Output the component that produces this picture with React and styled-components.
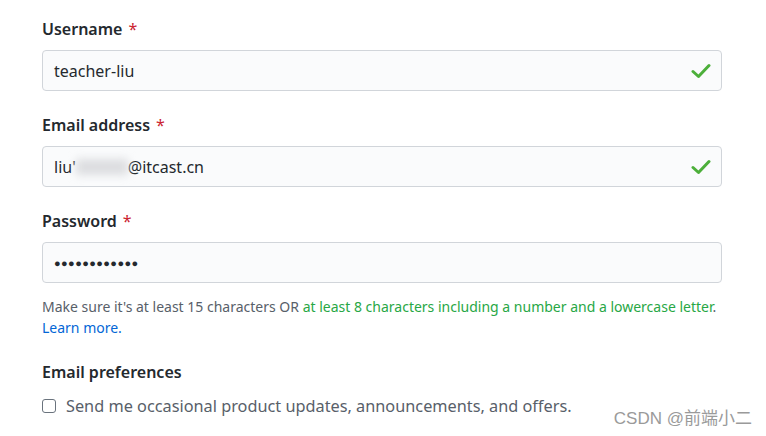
import * as React from "react";
import styled, { createGlobalStyle } from "styled-components";

const GlobalStyle = createGlobalStyle`
  html, body {
    margin: 0;
    padding: 0;
    background: #fff;
  }
  body {
    font-family: "Noto Sans", "Segoe UI", sans-serif;
    color: #24292e;
  }
`;

const Page = styled.div`
  position: relative;
  width: 766px;
  height: 436px;
  overflow: hidden;
  padding: 17px 0 0 42px;
  box-sizing: border-box;
`;

const Form = styled.form`
  width: 680px;
`;

const Field = styled.div`
  margin-bottom: 22px;
`;

const Label = styled.label`
  display: block;
  font-size: 16px;
  font-weight: 600;
  line-height: 24px;
  margin-bottom: 9px;
`;

const Required = styled.span`
  color: #cb2431;
  font-weight: 400;
  margin-left: 6px;
`;

const InputBox = styled.div`
  display: flex;
  align-items: center;
  height: 41px;
  box-sizing: border-box;
  padding: 0 10px 0 11px;
  background: #fafbfc;
  border: 1px solid #d1d5da;
  border-radius: 4px;
  font-size: 16px;
`;

const Value = styled.span`
  flex: 1;
  color: #24292e;
  font-size: ${(p) => (p.$dots ? "11px" : "16px")};
  letter-spacing: ${(p) => (p.$dots ? "0.4px" : "0")};
`;

const Blur = styled.span`
  display: inline-block;
  width: 52px;
  height: 16px;
  vertical-align: -2px;
  background: #dcdde0;
  filter: blur(4px);
`;

const Note = styled.p`
  margin: -9px 0 22px;
  font-size: 14px;
  line-height: 21px;
  color: #586069;
`;

const Green = styled.span`
  color: #28a745;
`;

const Link = styled.a`
  color: #0366d6;
  text-decoration: none;
`;

const Heading = styled.h3`
  margin: 0 0 11px;
  font-size: 16px;
  font-weight: 600;
  line-height: 24px;
`;

const CheckRow = styled.label`
  display: flex;
  align-items: center;
  gap: 10px;
  font-size: 16.3px;
  color: #586069;
`;

const Box = styled.span`
  width: 14px;
  height: 14px;
  box-sizing: border-box;
  border: 1px solid #6a737d;
  border-radius: 3px;
  background: #fff;
`;

const Watermark = styled.div`
  position: absolute;
  right: 14px;
  bottom: 7px;
  font-family: "Liberation Sans", "Noto Sans CJK SC", sans-serif;
  font-size: 17px;
  color: #9a9a9a;
`;

const Check = () => (
  <svg width="20" height="16" viewBox="0 0 20 16">
    <path d="M2 8.5 L7.5 13.5 L18 2.5" fill="none" stroke="#4caf3a" strokeWidth="3" strokeLinecap="round" strokeLinejoin="round" />
  </svg>
);

export default function App() {
  return (
    <>
      <GlobalStyle />
      <Page>
        <Form>
          <Field>
            <Label>Username<Required>*</Required></Label>
            <InputBox>
              <Value>teacher-liu</Value>
              <Check />
            </InputBox>
          </Field>
          <Field>
            <Label>Email address<Required>*</Required></Label>
            <InputBox>
              <Value>liu'<Blur />@itcast.cn</Value>
              <Check />
            </InputBox>
          </Field>
          <Field>
            <Label>Password<Required>*</Required></Label>
            <InputBox>
              <Value $dots>●●●●●●●●●●●●</Value>
            </InputBox>
          </Field>
          <Note>
            Make sure it's at least 15 characters OR{" "}
            <Green>at least 8 characters including a number and a lowercase letter</Green>.{" "}
            <Link href="#">Learn more.</Link>
          </Note>
          <Heading>Email preferences</Heading>
          <CheckRow>
            <Box />
            Send me occasional product updates, announcements, and offers.
          </CheckRow>
        </Form>
        <Watermark>CSDN @前端小二</Watermark>
      </Page>
    </>
  );
}
